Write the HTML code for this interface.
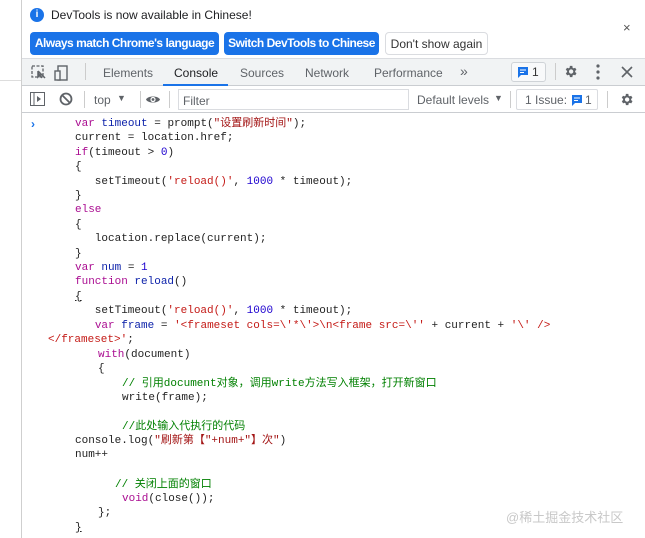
<!DOCTYPE html>
<html><head><meta charset="utf-8"><style>
*{margin:0;padding:0;box-sizing:border-box}
body{width:645px;height:538px;overflow:hidden;background:#fff;font-family:"Liberation Sans","Noto Sans CJK SC",sans-serif;position:relative;color:#202124}
.a{position:absolute;white-space:nowrap}
.btn{position:absolute;top:32px;height:23px;border-radius:4px;font-size:12px;line-height:23px;text-align:center;font-weight:bold;color:#fff;background:#1a73e8;letter-spacing:-0.5px}
.tab{position:absolute;top:66px;font-size:12px;color:#5f6368}
.code{position:absolute;font-family:"Liberation Mono","Noto Sans CJK SC",monospace;font-size:11px;line-height:14.4px;white-space:pre;color:#222}
.k{color:#aa0d91}.s{color:#c41a16}.n{color:#1c00cf}.v{color:#0d22aa}.c{color:#008000}.cs{color:#a31515}
</style></head><body>
<div class="a" style="left:21px;top:0;width:1px;height:538px;background:#cfcfcf"></div>
<div class="a" style="left:0;top:80px;width:21px;height:1px;background:#ddd"></div>
<!-- infobar -->
<div class="a" style="left:30px;top:8px;width:14px;height:14px;border-radius:50%;background:#1a73e8;color:#fff;font-size:10px;line-height:14px;text-align:center;font-weight:bold">i</div>
<div class="a" style="left:51px;top:8px;font-size:12px">DevTools is now available in Chinese!</div>
<div class="a" style="left:623px;top:20px;font-size:13px;color:#555">×</div>
<div class="btn" style="left:30px;width:189px">Always match Chrome's language</div>
<div class="btn" style="left:224px;width:155px">Switch DevTools to Chinese</div>
<div class="btn" style="left:385px;width:103px;background:#fff;color:#333;font-weight:normal;letter-spacing:0;border:1px solid #dadce0">Don't show again</div>
<!-- tabs row -->
<div class="a" style="left:22px;top:58px;width:623px;height:28px;background:#f1f3f4;border-top:1px solid #dadce0;border-bottom:1px solid #cacdd1"></div>
<svg class="a" style="left:31px;top:64px" width="40" height="18"><rect x="1" y="2" width="11" height="11" fill="none" stroke="#5f6368" stroke-width="1.3" stroke-dasharray="3 1.5"/><path d="M7 7l7 7M7 7v6l2-2l2 3" stroke="#5f6368" stroke-width="1.5" fill="#5f6368"/><rect x="27" y="2" width="9" height="14" fill="none" stroke="#5f6368" stroke-width="1.4"/><rect x="24" y="7" width="5" height="9" fill="#f1f3f4" stroke="#5f6368" stroke-width="1.4"/></svg>
<div class="a" style="left:85px;top:63px;width:1px;height:17px;background:#ccc"></div>
<div class="tab" style="left:103px">Elements</div>
<div class="tab" style="left:174px;color:#202124">Console</div>
<div class="a" style="left:163px;top:84px;width:65px;height:2px;background:#1a73e8"></div>
<div class="tab" style="left:240px">Sources</div>
<div class="tab" style="left:305px">Network</div>
<div class="tab" style="left:374px">Performance</div>
<div class="tab" style="left:460px;top:63px;font-size:14px">»</div>
<div class="a" style="left:511px;top:62px;width:35px;height:20px;border:1px solid #cfd3d7;border-radius:3px;background:#f8f9fa"></div>
<svg class="a" style="left:517px;top:66px" width="12" height="12"><path d="M1 1h10v8H4l-3 3z" fill="#1a73e8"/><path d="M3 4h6M3 6.5h4" stroke="#fff" stroke-width="1"/></svg>
<div class="a" style="left:532px;top:65px;font-size:12px;color:#333">1</div>
<div class="a" style="left:555px;top:63px;width:1px;height:17px;background:#ccc"></div>
<svg class="a" style="left:563px;top:64px" width="15" height="15" viewBox="0 0 24 24"><path fill="#5f6368" d="M19.4 13a7.5 7.5 0 0 0 0-2l2.1-1.6-2-3.5-2.5 1a7.6 7.6 0 0 0-1.7-1L15 3h-4l-.4 2.9a7.6 7.6 0 0 0-1.7 1l-2.5-1-2 3.5L6.6 11a7.5 7.5 0 0 0 0 2l-2.1 1.6 2 3.5 2.5-1a7.6 7.6 0 0 0 1.7 1L11 21h4l.4-2.9a7.6 7.6 0 0 0 1.7-1l2.5 1 2-3.5zM13 15.5a3.5 3.5 0 1 1 0-7 3.5 3.5 0 0 1 0 7z"/></svg>
<svg class="a" style="left:596px;top:64px" width="4" height="16"><circle cx="2" cy="2" r="1.6" fill="#5f6368"/><circle cx="2" cy="8" r="1.6" fill="#5f6368"/><circle cx="2" cy="14" r="1.6" fill="#5f6368"/></svg>
<svg class="a" style="left:621px;top:66px" width="12" height="12"><path d="M1 1l10 10M11 1L1 11" stroke="#5f6368" stroke-width="1.6"/></svg>
<!-- console toolbar -->
<div class="a" style="left:22px;top:112px;width:623px;height:1px;background:#cacdd1"></div>
<svg class="a" style="left:30px;top:92px" width="15" height="14"><rect x="0.5" y="0.5" width="14" height="13" fill="none" stroke="#5f6368"/><path d="M4 1v12" stroke="#5f6368"/><path d="M7 4l4 3-4 3z" fill="#5f6368"/></svg>
<svg class="a" style="left:59px;top:92px" width="14" height="14"><circle cx="7" cy="7" r="5.5" fill="none" stroke="#5f6368" stroke-width="1.8"/><path d="M3 3l8 8" stroke="#5f6368" stroke-width="1.8"/></svg>
<div class="a" style="left:84px;top:91px;width:1px;height:17px;background:#ccc"></div>
<div class="a" style="left:94px;top:93px;font-size:12px;color:#5f6368">top</div>
<div class="a" style="left:117px;top:93px;font-size:9px;color:#5f6368">▼</div>
<div class="a" style="left:140px;top:91px;width:1px;height:17px;background:#ccc"></div>
<svg class="a" style="left:145px;top:94px" width="16" height="11"><path d="M1 5.5C3 1.5 13 1.5 15 5.5 13 9.5 3 9.5 1 5.5z" fill="#5f6368"/><circle cx="8" cy="5.5" r="2.6" fill="#fff"/><circle cx="8" cy="5.5" r="1.4" fill="#5f6368"/></svg>
<div class="a" style="left:169px;top:91px;width:1px;height:17px;background:#ccc"></div>
<div class="a" style="left:178px;top:89px;width:231px;height:21px;border:1px solid #dadce0;background:#fff"></div>
<div class="a" style="left:183px;top:94px;font-size:12px;color:#5f6368">Filter</div>
<div class="a" style="left:417px;top:93px;font-size:12px;color:#5f6368">Default levels</div>
<div class="a" style="left:494px;top:93px;font-size:9px;color:#5f6368">▼</div>
<div class="a" style="left:510px;top:91px;width:1px;height:17px;background:#ccc"></div>
<div class="a" style="left:516px;top:89px;width:82px;height:21px;border:1px solid #dadce0;border-radius:2px"></div>
<div class="a" style="left:525px;top:93px;font-size:12px;color:#5f6368">1 Issue:</div>
<svg class="a" style="left:571px;top:94px" width="12" height="12"><path d="M1 1h10v8H4l-3 3z" fill="#1a73e8"/><path d="M3 4h6M3 6.5h4" stroke="#fff" stroke-width="1"/></svg>
<div class="a" style="left:585px;top:93px;font-size:12px;color:#5f6368">1</div>
<div class="a" style="left:607px;top:91px;width:1px;height:17px;background:#ccc"></div>
<svg class="a" style="left:619px;top:92px" width="15" height="15" viewBox="0 0 24 24"><path fill="#5f6368" d="M19.4 13a7.5 7.5 0 0 0 0-2l2.1-1.6-2-3.5-2.5 1a7.6 7.6 0 0 0-1.7-1L15 3h-4l-.4 2.9a7.6 7.6 0 0 0-1.7 1l-2.5-1-2 3.5L6.6 11a7.5 7.5 0 0 0 0 2l-2.1 1.6 2 3.5 2.5-1a7.6 7.6 0 0 0 1.7 1L11 21h4l.4-2.9a7.6 7.6 0 0 0 1.7-1l2.5 1 2-3.5zM13 15.5a3.5 3.5 0 1 1 0-7 3.5 3.5 0 0 1 0 7z"/></svg>
<!-- code -->
<div class="a" style="left:31px;top:117px;color:#1a73e8;font-size:12px;font-weight:bold">›</div>
<div class="code" style="left:75px;top:117px"><span class="k">var</span> <span class="v">timeout</span> = prompt(<span class="cs">"设置刷新时间"</span>);
current = location.href;
<span class="k">if</span>(timeout &gt; <span class="n">0</span>)
{
   setTimeout(<span class="s">'reload()'</span>, <span class="n">1000</span> * timeout);
}
<span class="k">else</span>
{
   location.replace(current);
}
<span class="k">var</span> <span class="v">num</span> = <span class="n">1</span>
<span class="k">function</span> <span class="v">reload</span>()
<u>{</u>
   setTimeout(<span class="s">'reload()'</span>, <span class="n">1000</span> * timeout);
   <span class="k">var</span> <span class="v">frame</span> = <span class="s">'&lt;frameset cols=\'*\'&gt;\n&lt;frame src=\''</span> + current + <span class="s">'\' /&gt;</span></div>
<div class="code" style="left:48px;top:333px"><span class="s">&lt;/frameset&gt;'</span>;</div>
<div class="code" style="left:98px;top:348px"><span class="k">with</span>(document)
{</div>
<div class="code" style="left:122px;top:377px"><span class="c">// 引用document对象，调用write方法写入框架，打开新窗口</span>
write(frame);

<span class="c">//此处输入代执行的代码</span></div>
<div class="code" style="left:75px;top:434px">console.log(<span class="cs">"刷新第【"+num+"】次"</span>)
num++</div>
<div class="code" style="left:115px;top:478px"><span class="c">// 关闭上面的窗口</span></div>
<div class="code" style="left:122px;top:492px"><span class="k">void</span>(close());</div>
<div class="code" style="left:98px;top:506px">};</div>
<div class="code" style="left:75px;top:521px"><u>}</u></div>
<div class="a" style="left:506px;top:507px;font-size:13px;color:#c8c8c8">@稀土掘金技术社区</div>
</body></html>
